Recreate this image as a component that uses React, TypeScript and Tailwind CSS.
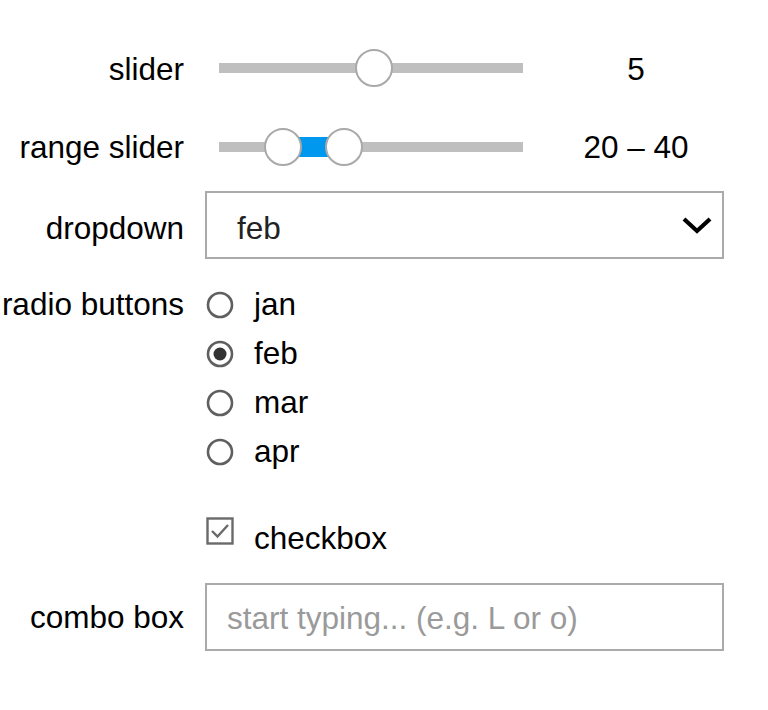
import { useState } from 'react';

const labelCls = 'w-[184px] shrink-0 flex justify-end whitespace-nowrap';

const Label = ({ text, className = '' }: { text: string; className?: string }) => (
  <div className={`${labelCls} ${className}`}>
    <span>{text}</span>
  </div>
);

const Thumb = ({ left }: { left: number }) => (
  <div
    className="absolute top-[1px] w-[38px] h-[38px] rounded-full bg-white border-2 border-[#a9a9a9]"
    style={{ left }}
  />
);

const Radio = ({ checked }: { checked: boolean }) => (
  <svg width="28" height="28" viewBox="0 0 28 28" className="shrink-0">
    <circle cx="14" cy="14" r="12" fill="white" stroke="#5f5f5f" strokeWidth="2.6" />
    {checked && <circle cx="14" cy="14" r="6.5" fill="#333" />}
  </svg>
);

const Chevron = () => (
  <svg width="32" height="20" viewBox="0 0 32 20">
    <polyline points="3,4 16,16 29,4" fill="none" stroke="#000" strokeWidth="4.2" />
  </svg>
);

export default function App() {
  const [month, setMonth] = useState('feb');
  const [checked, setChecked] = useState(true);
  const months = ['jan', 'feb', 'mar', 'apr'];

  return (
    <div className="min-h-[710px] w-full bg-white text-black text-[31.5px] font-['Liberation_Sans',Arial,sans-serif] overflow-hidden">
      <div className="flex flex-col pt-[38px]">
        {/* slider */}
        <div className="flex items-center h-[60px]">
          <Label text="slider" className="pt-[4px]" />
          <div className="relative ml-[35px] w-[304px] h-[40px]">
            <div className="absolute left-0 right-0 top-[15px] h-[10px] bg-[#bfbfbf]" />
            <Thumb left={136} />
          </div>
          <div className="ml-[25px] w-[176px] text-center pt-[3px]">5</div>
        </div>

        {/* range slider */}
        <div className="flex items-center h-[60px] mt-[19px]">
          <Label text="range slider" className="pt-[2px]" />
          <div className="relative ml-[35px] w-[304px] h-[40px]">
            <div className="absolute left-0 right-0 top-[15px] h-[10px] bg-[#bfbfbf]" />
            <div className="absolute left-[64px] w-[61px] top-[10px] h-[20px] bg-[#0098ee]" />
            <Thumb left={45} />
            <Thumb left={106} />
          </div>
          <div className="ml-[25px] w-[176px] text-center pt-[2px]">20 – 40</div>
        </div>

        {/* dropdown */}
        <div className="flex items-center mt-[14px]">
          <Label text="dropdown" className="pt-[7px]" />
          <div className="ml-[21px] w-[519px] h-[68px] border-2 border-[#aaa] flex items-center justify-between pl-[30px] pr-[9px] text-[#222]">
            <span className="pt-[7px]">{month}</span>
            <Chevron />
          </div>
        </div>

        {/* radio buttons */}
        <div className="flex items-start mt-[21px]">
          <div className="h-[49px] flex items-center">
            <Label text="radio buttons" />
          </div>
          <div className="ml-[22px] flex flex-col">
            {months.map((m) => (
              <button
                key={m}
                onClick={() => setMonth(m)}
                className="h-[49px] flex items-center gap-[20px] text-left"
              >
                <Radio checked={month === m} />
                <span>{m}</span>
              </button>
            ))}
          </div>
        </div>

        {/* checkbox */}
        <div className="flex items-center h-[49px] mt-[38px]">
          <div className="w-[184px] shrink-0" />
          <button
            onClick={() => setChecked(!checked)}
            className="ml-[22px] h-[49px] flex items-center gap-[20px]"
          >
            <svg width="28" height="28" viewBox="0 0 28 28" className="shrink-0 -mt-[15px]">
              <rect x="1.5" y="1.5" width="25" height="25" fill="white" stroke="#6a6a6a" strokeWidth="2.4" />
              {checked && (
                <polyline points="6,14 11.5,19.5 22,8" fill="none" stroke="#6a6a6a" strokeWidth="2.4" />
              )}
            </svg>
            <span>checkbox</span>
          </button>
        </div>

        {/* combo box */}
        <div className="flex items-center mt-[20px]">
          <Label text="combo box" className="pt-[2px]" />
          <input
            placeholder="start typing... (e.g. L or o)"
            className="ml-[21px] w-[519px] h-[68px] border-2 border-[#aaa] pl-[20px] pt-[2px] outline-none placeholder:text-[#9a9a9a] font-['Liberation_Sans',Arial,sans-serif] text-[31.5px]"
          />
        </div>
      </div>
    </div>
  );
}
